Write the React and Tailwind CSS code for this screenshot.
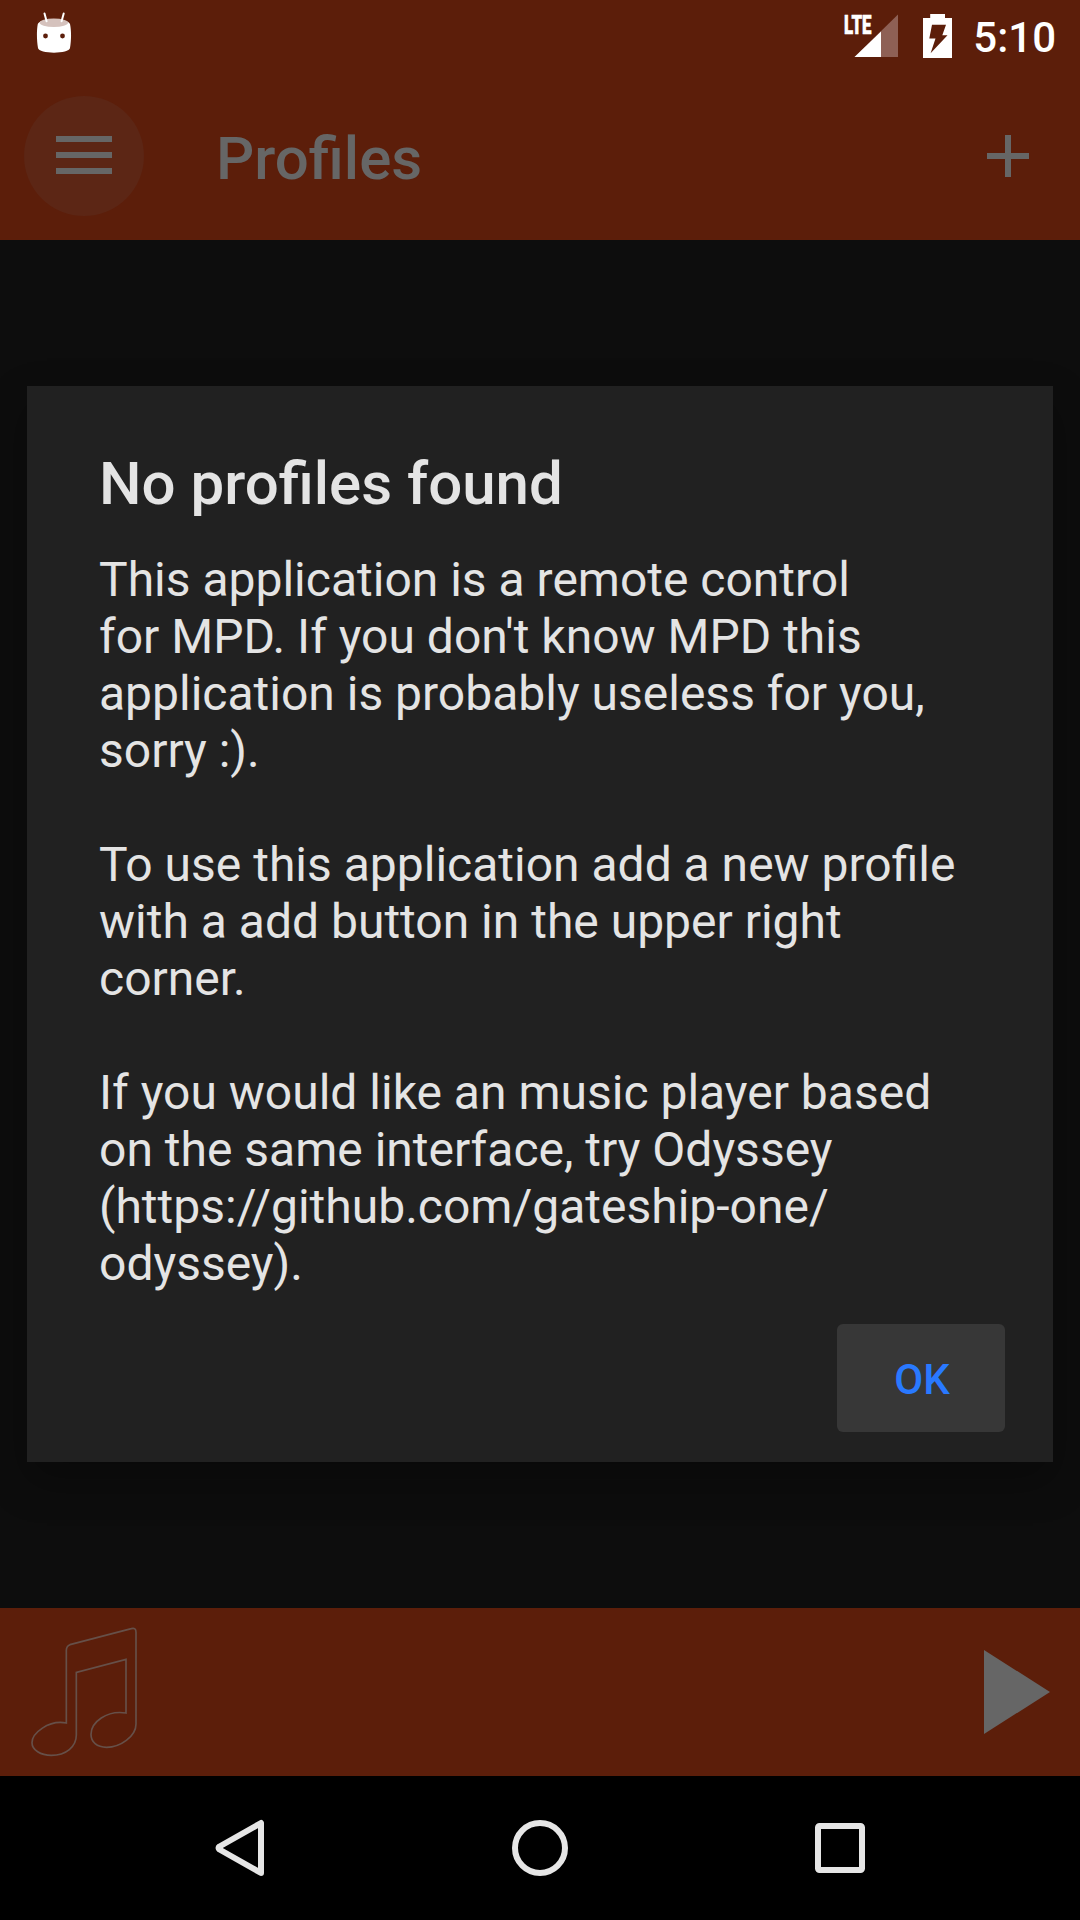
function StatusBar() {
  return (
    <div className="flex h-[72px] items-start justify-between">
      <svg className="ml-9 mt-3 h-[42px] w-9" viewBox="0 0 36 42" fill="none">
        <path d="M1.8 12C4 5.5 32 5.5 34 12C35.4 18 35.4 28 34 36C33.4 42.2 2.6 42.2 2 36C.6 28 .6 18 1.8 12Z" fill="#fff" />
        <ellipse cx="17.8" cy="10.7" rx="14.3" ry="4.2" fill="#d5c2bd" />
        <path d="M8.5 1.5 10.6 9.2M27.7 1.5 25.6 9.2" stroke="#fff" strokeWidth="2" strokeLinecap="round" />
        <circle cx="9.5" cy="24" r="2.4" fill="#5c1e0a" />
        <circle cx="26.5" cy="24" r="2.4" fill="#5c1e0a" />
      </svg>
      <div className="flex items-start pr-6">
        <svg className="mt-2 h-[52px] w-[60px]" viewBox="-6 -4 60 52">
          <text x="0" y="21.500" fill="#fff" stroke="#fff" strokeWidth=".6" fontFamily="Roboto" fontWeight="900" fontSize="25.500" textLength="27.500" lengthAdjust="spacingAndGlyphs">LTE</text>
          <path d="M54 2.500V45H10.500Z" fill="#8e6055" />
          <path d="M37 19.500V45H10.500Z" fill="#fff" />
        </svg>
        <svg className="ml-[25px] mt-[14px] h-11 w-[29px]" viewBox="0 0 29 44">
          <path d="M7.200 0H22V4H29V44H0V4H7.200Z" fill="#fff" />
          <path d="M9 10.700H23L19.300 21.300H24.500L7.600 39.300L12.500 24.500H6.300Z" fill="#5c1e0a" />
        </svg>
        <div className="ml-[21px] mt-[13px] text-[42px] font-medium leading-[50px] text-white">5:10</div>
      </div>
    </div>
  );
}

function AppBar() {
  return (
    <div className="flex h-42 items-center pl-6 pr-[51px]">
      <div className="flex h-[120px] w-[120px] items-center justify-center rounded-full bg-[#5c2615] pb-[2px]">
        <svg className="h-[38px] w-14" viewBox="0 0 56 38" fill="#666">
          <path d="M0 0H56V6H0ZM0 16H56V22H0ZM0 32H56V38H0Z" />
        </svg>
      </div>
      <h1 className="ml-18 mt-[6px] flex-1 text-[60px] font-medium leading-[70px] text-[#666]">Profiles</h1>
      <svg className="h-[42px] w-[42px]" viewBox="0 0 42 42" fill="#666">
        <path d="M18 0H24V18H42V24H24V42H18V24H0V18H18Z" />
      </svg>
    </div>
  );
}

function Dialog() {
  return (
    <div className="flex h-[1076px] w-[1026px] flex-col bg-[#212121] shadow-[0_18px_40px_rgba(0,0,0,0.3)]">
      <h2 className="ml-[72px] mt-[63px] text-[60px] font-medium leading-[70px] text-[#e4e4e4]">No profiles found</h2>
      <div className="ml-[72px] mt-[32px] whitespace-pre text-[48px] leading-[57px] text-[#e4e4e4]">
        <p>{"This application is a remote control\nfor MPD. If you don't know MPD this\napplication is probably useless for you,\nsorry :)."}</p>
        <p className="mt-[57px]">{"To use this application add a new profile\nwith a add button in the upper right\ncorner."}</p>
        <p className="mt-[57px]">{"If you would like an music player based\non the same interface, try Odyssey\n(https://github.com/gateship-one/\nodyssey)."}</p>
      </div>
      <button className="mb-[30px] mr-12 mt-auto flex h-[108px] w-42 items-center justify-center self-end rounded-md bg-[#373737] pl-[2px] pt-[2px] text-[42px] font-medium text-[#2979ff]">OK</button>
    </div>
  );
}

function PlayerBar() {
  return (
    <div className="flex h-42 items-center justify-between bg-[#5c1e0a] pr-[30px]">
      <svg className="h-42 w-42" viewBox="0 54 504 504" fill="none" stroke="#665049" strokeWidth="5">
        <path d="M199 399V181Q199 168 210 164L394 116Q408 112 408 127V402C408 440 360 472 320 472C290 472 273 456 273 433C273 397 320 360 378 369V208L229 247V435C229 470 198 496 154 496C122 496 96 480 96 458C96 430 145 389 199 399Z" />
      </svg>
      <svg className="h-[84px] w-[66px]" viewBox="0 0 66 84"><path d="M0 0 66 42 0 84Z" fill="#666" /></svg>
    </div>
  );
}

function NavigationBar() {
  return (
    <div className="flex h-36 items-center bg-black pl-[212px] pr-[212px]">
      <div className="flex flex-1 items-center justify-between">
        <svg className="h-[60px] w-14" viewBox="0 0 56 60" fill="none" stroke="#e6e6e6" strokeWidth="6" strokeLinejoin="round">
          <path d="M49 5V55L7.500 31.500Q5.500 30 7.500 28.500Z" />
        </svg>
        <svg className="h-14 w-14" viewBox="0 0 56 56" fill="none" stroke="#e6e6e6" strokeWidth="6">
          <circle cx="28" cy="28" r="25" />
        </svg>
        <svg className="h-[50px] w-14" viewBox="0 0 56 50" fill="none" stroke="#e6e6e6" strokeWidth="6">
          <rect x="6" y="3" width="44" height="44" rx="1.500" />
        </svg>
      </div>
    </div>
  );
}

export default function App() {
  return (
    <div className="flex h-[1920px] w-[1080px] flex-col overflow-hidden bg-[#0d0d0d] font-['Roboto',sans-serif]">
      <header className="h-60 bg-[#5c1e0a]">
        <StatusBar />
        <AppBar />
      </header>
      <main className="flex flex-1 items-center justify-center">
        <Dialog />
      </main>
      <PlayerBar />
      <NavigationBar />
    </div>
  );
}
